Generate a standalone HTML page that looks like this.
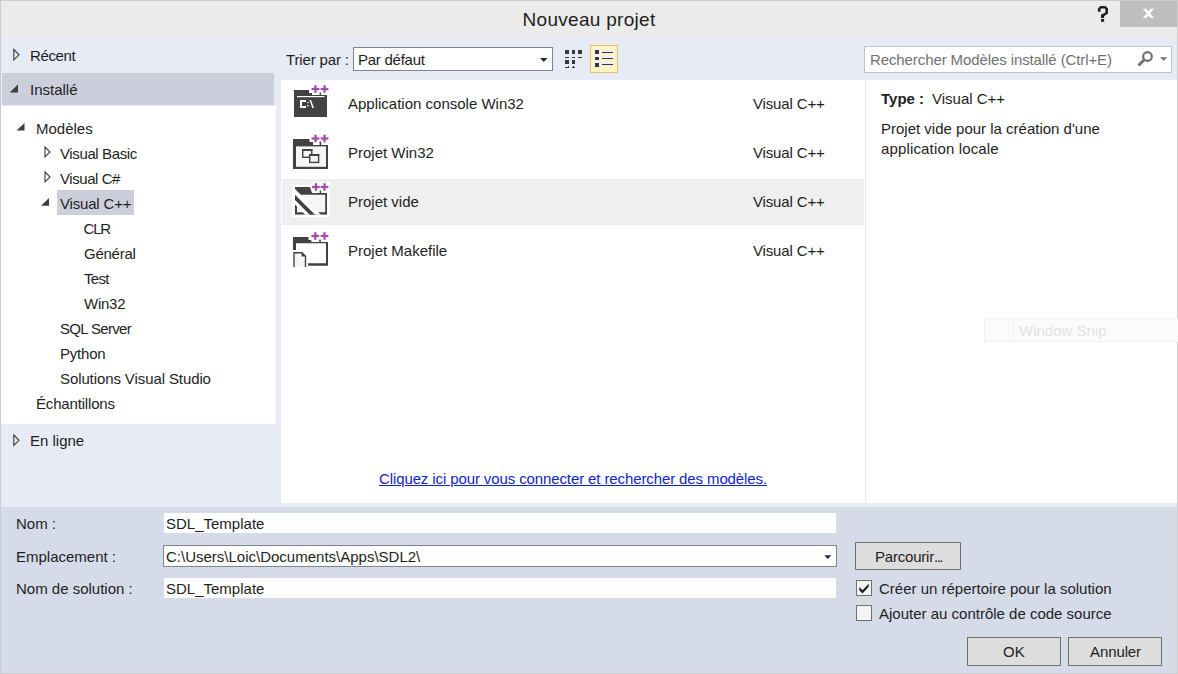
<!DOCTYPE html>
<html><head><meta charset="utf-8">
<style>
*{margin:0;padding:0;box-sizing:border-box}
html,body{width:1178px;height:674px;overflow:hidden;background:#CCCCCC}
body{position:relative;font-family:"Liberation Sans",sans-serif;font-size:15px;color:#1E1E1E}
.a{position:absolute}
.t{position:absolute;white-space:nowrap;line-height:17px;height:17px}
svg{position:absolute;overflow:visible}
</style></head><body>
<!-- title bar -->
<div class="a" style="left:1px;top:1px;width:1176px;height:37px;background:#EBEBEB"></div>
<div class="t" style="left:522.5px;top:9px;font-size:19px;line-height:22px;height:22px;color:#1E1E1E;letter-spacing:0.3px">Nouveau projet</div>
<svg style="left:0;top:0" width="1178" height="40">
 <path d="M1097.9 11.7 V8.6 L1100.4 6 H1105.5 L1108 8.5 V13.6 L1104.1 16.2 V17.9 H1101 V14.8 L1105.4 12.5 V9.2 L1104.8 8.6 H1101.1 L1100.5 9.2 V11.7 Z" fill="#1E1E1E"/>
 <rect x="1101" y="19" width="3.1" height="2.8" fill="#1E1E1E"/>
</svg>
<div class="a" style="left:1120px;top:1px;width:57px;height:26px;background:#BEBEBE"></div>
<svg style="left:0;top:0" width="1178" height="40">
 <path d="M1142.9 8.7 H1146.3 L1154 18.1 H1150.6 Z M1150.6 8.7 H1154 L1146.3 18.1 H1142.9 Z" fill="#FFFFFF"/>
</svg>

<!-- header / panels bg -->
<div class="a" style="left:1px;top:38px;width:1176px;height:469px;background:#E6EBF5"></div>
<!-- left: installed selection -->
<div class="a" style="left:2px;top:73px;width:272px;height:32px;background:#CCCEDB"></div>
<div class="a" style="left:1px;top:106px;width:275px;height:318px;background:#FFFFFF"></div>
<!-- center white -->
<div class="a" style="left:281px;top:80px;width:584px;height:423px;background:#FFFFFF"></div>
<div class="a" style="left:865px;top:80px;width:1px;height:423px;background:#E4E9F3"></div>
<div class="a" style="left:866px;top:80px;width:311px;height:423px;background:#FFFFFF"></div>
<!-- bottom panel -->
<div class="a" style="left:1px;top:507px;width:1176px;height:166px;background:#D6DBE9"></div>

<!-- left tree -->
<svg style="left:0;top:0" width="300" height="460">
 <g fill="none" stroke="#3E3E3E" stroke-width="1.1">
  <path d="M13.8 49.5 L19 54.8 L13.8 60 Z"/>
  <path d="M45 147 L50 152 L45 157 Z"/>
  <path d="M45 172 L50 177 L45 182 Z"/>
  <path d="M13.8 435 L19 440.3 L13.8 445.5 Z"/>
 </g>
 <g fill="#3E3E3E">
  <path d="M9.7 92.5 L18 92.5 L18 84.5 Z"/>
  <path d="M16.5 130.5 L24.5 130.5 L24.5 123 Z"/>
  <path d="M41 205.8 L49 205.8 L49 198 Z"/>
 </g>
</svg>
<div class="t" style="left:30px;top:47px;letter-spacing:-0.38px">Récent</div>
<div class="t" style="left:30px;top:81px">Installé</div>
<div class="t" style="left:36px;top:120px">Modèles</div>
<div class="t" style="left:60px;top:145px;letter-spacing:-0.38px">Visual Basic</div>
<div class="t" style="left:60px;top:170px;letter-spacing:-0.44px">Visual C#</div>
<div class="a" style="left:57px;top:190px;width:77px;height:25px;background:#CCCEDB"></div>
<div class="t" style="left:60px;top:195px;letter-spacing:-0.18px">Visual C++</div>
<div class="t" style="left:83.5px;top:220px;letter-spacing:-1.2px">CLR</div>
<div class="t" style="left:84px;top:245px;letter-spacing:-0.25px">Général</div>
<div class="t" style="left:84px;top:270px;letter-spacing:-0.7px">Test</div>
<div class="t" style="left:84px;top:295px;letter-spacing:-0.25px">Win32</div>
<div class="t" style="left:60px;top:320px;letter-spacing:-0.68px">SQL Server</div>
<div class="t" style="left:60px;top:345px;letter-spacing:-0.2px">Python</div>
<div class="t" style="left:60px;top:370px;letter-spacing:-0.1px">Solutions Visual Studio</div>
<div class="t" style="left:36px;top:395px;letter-spacing:-0.17px">Échantillons</div>
<div class="t" style="left:30px;top:432px">En ligne</div>

<!-- sort bar -->
<div class="t" style="left:286px;top:51px;letter-spacing:-0.15px">Trier par :</div>
<div class="a" style="left:353px;top:47px;width:200px;height:24px;background:#FFFFFF;border:1px solid #7D8594"></div>
<div class="t" style="left:358px;top:51px;letter-spacing:-0.25px">Par défaut</div>
<svg style="left:0;top:0" width="1178" height="80">
 <path d="M540 58 L547.5 58 L543.75 62 Z" fill="#1B293E"/>
</svg>
<!-- view icons -->
<svg style="left:0;top:0" width="700" height="80" shape-rendering="crispEdges">
 <g fill="#383838">
  <rect x="565" y="50" width="4" height="4"/><rect x="572" y="50" width="3" height="4"/><rect x="578" y="50" width="4" height="4"/>
  <rect x="565" y="57" width="4" height="1"/><rect x="572" y="57" width="3" height="1"/><rect x="578" y="57" width="4" height="1"/>
  <rect x="565" y="60" width="4" height="4"/><rect x="572" y="60" width="3" height="4"/>
  <rect x="565" y="67" width="4" height="1"/><rect x="568" y="66" width="1" height="1"/><rect x="572" y="67" width="3" height="1"/><rect x="573" y="66" width="1" height="1"/>
 </g>
 <rect x="590.7" y="45.7" width="26.6" height="26.6" fill="#FFF2C4" stroke="#E6C062" stroke-width="1.4"/>
 <g fill="#F0F0F2"><rect x="594" y="49" width="6" height="19"/><rect x="601" y="50" width="13" height="4"/><rect x="601" y="56" width="13" height="4"/><rect x="601" y="62" width="13" height="4"/></g>
 <g fill="#383838">
  <rect x="595" y="50" width="4" height="4"/><rect x="602" y="52" width="11" height="1"/>
  <rect x="595" y="57" width="4" height="3"/><rect x="602" y="58" width="11" height="1"/>
  <rect x="595" y="63" width="4" height="4"/><rect x="602" y="64" width="11" height="1"/>
 </g>
</svg>
<!-- search -->
<div class="a" style="left:864px;top:46px;width:308px;height:27px;background:#FFFFFF;border:1px solid #BCC3D2"></div>
<div class="t" style="left:870px;top:51px;color:#717171;letter-spacing:-0.1px">Rechercher Modèles installé (Ctrl+E)</div>
<svg style="left:0;top:0" width="1178" height="80">
 <circle cx="1147.5" cy="56.5" r="4.3" fill="none" stroke="#717171" stroke-width="2.2"/>
 <line x1="1144.2" y1="59.8" x2="1138.5" y2="65.5" stroke="#717171" stroke-width="3"/>
 <path d="M1160 57.2 L1167.3 57.2 L1163.65 60.8 Z" fill="#717171"/>
</svg>

<!-- list items -->
<div class="a" style="left:282px;top:179px;width:582px;height:46px;background:#EFEFEF"></div>
<div class="t" style="left:348px;top:95px">Application console Win32</div>
<div class="t" style="left:753px;top:95px;letter-spacing:-0.15px">Visual C++</div>
<div class="t" style="left:348px;top:144px">Projet Win32</div>
<div class="t" style="left:753px;top:144px;letter-spacing:-0.15px">Visual C++</div>
<div class="t" style="left:348px;top:193px">Projet vide</div>
<div class="t" style="left:753px;top:193px;letter-spacing:-0.15px">Visual C++</div>
<div class="t" style="left:348px;top:242px">Projet Makefile</div>
<div class="t" style="left:753px;top:242px;letter-spacing:-0.15px">Visual C++</div>

<!-- icons -->
<svg style="left:0;top:0" width="340" height="280">
 <defs>
  <clipPath id="c3"><rect x="295" y="187" width="32" height="27.7"/></clipPath>
 </defs>
 <!-- icon1 console -->
 <path d="M294 90 H309 V93 H312 V95 H327 V117 H294 Z" fill="#424242"/>
 <rect x="312" y="83" width="19" height="12" fill="#FFFFFF"/>
 <rect x="319.6" y="92.5" width="1.4" height="3" fill="#424242"/>
 <rect x="297" y="96" width="27.5" height="1.2" fill="#FFFFFF"/>
 <path d="M306 100 H300 V108 H306 V106 H302 V102 H306 Z" fill="#FFFFFF"/>
 <rect x="307.2" y="101.8" width="1.3" height="1.4" fill="#fff"/><rect x="307.2" y="105" width="1.3" height="1.4" fill="#fff"/>
 <path d="M309.5 100 L311 100 L314 108 L312.3 108 Z" fill="#fff"/>
 <g fill="#A24CA8"><rect x="314.35" y="85.25" width="2.3" height="7.5"/><rect x="311.60" y="87.90" width="7.8" height="2.2"/><rect x="323.35" y="85.25" width="2.3" height="7.5"/><rect x="320.60" y="87.90" width="7.8" height="2.2"/></g>

 <!-- icon2 win32 -->
 <path d="M293 139 H309.5 V142 H313 V145 H328 V169 H293 Z" fill="#424242"/>
 <rect x="296" y="146.4" width="30" height="20.4" fill="#F6F6F6"/>
 <rect x="313" y="132" width="17" height="12.8" fill="#FFFFFF"/>
 <rect x="319.6" y="141.5" width="1.6" height="4" fill="#424242"/>
 <rect x="302.7" y="149.7" width="9" height="7.6" fill="#F6F6F6" stroke="#424242" stroke-width="1.4"/>
 <rect x="302" y="149" width="10.4" height="2" fill="#424242"/>
 <rect x="309.7" y="154.7" width="8.9" height="7.7" fill="#F6F6F6" stroke="#424242" stroke-width="1.4"/>
 <rect x="309" y="154" width="10.3" height="2" fill="#424242"/>
 <g fill="#A24CA8"><rect x="314.35" y="134.75" width="2.3" height="7.5"/><rect x="311.60" y="137.40" width="7.8" height="2.2"/><rect x="323.35" y="134.75" width="2.3" height="7.5"/><rect x="320.60" y="137.40" width="7.8" height="2.2"/></g>

 <!-- icon3 empty -->
 <rect x="292" y="184.8" width="37.7" height="32.2" fill="#FFFFFF"/>
 <rect x="311" y="182" width="19" height="10" fill="#FFFFFF"/>
 <g clip-path="url(#c3)">
  <rect x="297" y="194.7" width="28.2" height="17.5" fill="#F6F6F6"/>
  <path d="M295 187 H310 L312 192.7 V193 H327 V214.7 H295 Z M297 194.7 V212.2 H325.2 V194.7 Z" fill="#424242" fill-rule="evenodd"/>
  <path d="M280 174 L340 234 L340 249.5 L280 189.5 Z" fill="#FFFFFF"/>
  <path d="M280 179.7 L340 239.7 L340 245 L280 185 Z" fill="#424242"/>
 </g>
 <rect x="319.7" y="190.5" width="1.4" height="3" fill="#424242"/>
 <g fill="#A24CA8"><rect x="314.75" y="183.25" width="2.3" height="7.5"/><rect x="312.00" y="185.90" width="7.8" height="2.2"/><rect x="323.35" y="183.25" width="2.3" height="7.5"/><rect x="320.60" y="185.90" width="7.8" height="2.2"/></g>

 <!-- icon4 makefile -->
 <path d="M293 237 H308.5 V240 H311.5 V242 H328 V265.7 H308 V263.2 H326 V243.3 H296 V250 H293 Z" fill="#424242"/>
 <rect x="311.5" y="230" width="18.5" height="11.5" fill="#FFFFFF"/>
 <rect x="319.2" y="239.5" width="1.6" height="3.5" fill="#424242"/>
 <path d="M294 267 V252.7 H302 L305.5 256.3 V267" fill="#F6F6F6" stroke="#424242" stroke-width="1.4"/>
 <path d="M301.6 252 V256.6 H306 Z" fill="#424242"/>
 <g fill="#A24CA8"><rect x="314.15" y="232.25" width="2.3" height="7.5"/><rect x="311.40" y="234.90" width="7.8" height="2.2"/><rect x="323.35" y="232.25" width="2.3" height="7.5"/><rect x="320.60" y="234.90" width="7.8" height="2.2"/></g>
</svg>

<!-- info panel -->
<div class="t" style="left:881px;top:90px;font-weight:bold">Type :</div>
<div class="t" style="left:932px;top:90px">Visual C++</div>
<div class="t" style="left:881px;top:120px">Projet vide pour la création d'une</div>
<div class="t" style="left:881px;top:140px;letter-spacing:0.15px">application locale</div>

<!-- window snip ghost -->
<div class="a" style="left:984px;top:318px;width:194px;height:24px;background:#FAFBFD;border:1px solid #EEF1F7;border-right:none"></div>
<div class="a" style="left:1013px;top:319px;width:1px;height:22px;background:#F0F2F7"></div>
<div class="t" style="left:1019px;top:322px;color:#E2E2E2">Window Snip</div>

<!-- link -->
<div class="t" style="left:379px;top:470px;color:#1224C8;text-decoration:underline;letter-spacing:-0.11px">Cliquez ici pour vous connecter et rechercher des modèles.</div>

<!-- bottom form -->
<div class="t" style="left:16px;top:515px">Nom :</div>
<div class="t" style="left:16px;top:548px">Emplacement :</div>
<div class="t" style="left:16px;top:580px">Nom de solution :</div>
<div class="a" style="left:164px;top:513px;width:672px;height:20px;background:#FFFFFF"></div>
<div class="t" style="left:166px;top:515px">SDL_Template</div>
<div class="a" style="left:163px;top:545px;width:674px;height:22px;background:#FFFFFF;border:1px solid #7D8594"></div>
<div class="t" style="left:166px;top:548px">C:\Users\Loic\Documents\Apps\SDL2\</div>
<svg style="left:0;top:0" width="1178" height="674">
 <path d="M824.3 555.3 L831.3 555.3 L827.8 558.9 Z" fill="#1B293E"/>
</svg>
<div class="a" style="left:164px;top:578px;width:672px;height:20px;background:#FFFFFF"></div>
<div class="t" style="left:166px;top:580px">SDL_Template</div>

<div class="a" style="left:855px;top:542px;width:106px;height:28px;background:#DDDDDD;border:1px solid #707070"></div>
<div class="t" style="left:875px;top:548px;letter-spacing:-0.2px">Parcourir<span style="letter-spacing:-1.6px">...</span></div>

<div class="a" style="left:856px;top:580px;width:16px;height:16px;background:#F3F3F3;border:1px solid #707070"></div>
<svg style="left:0;top:0" width="1178" height="674">
 <path d="M859.3 587 L862.5 590.3 L868.7 583.7 L868.7 586.8 L862.5 593.6 L859.3 590.2 Z" fill="#1E1E1E"/>
</svg>
<div class="t" style="left:879px;top:580px">Créer un répertoire pour la solution</div>
<div class="a" style="left:856px;top:605px;width:16px;height:16px;background:#F3F3F3;border:1px solid #707070"></div>
<div class="t" style="left:879px;top:605px">Ajouter au contrôle de code source</div>

<div class="a" style="left:967px;top:637px;width:94px;height:29px;background:#DDDDDD;border:1px solid #707070"></div>
<div class="t" style="left:1003px;top:643px">OK</div>
<div class="a" style="left:1068px;top:637px;width:94px;height:29px;background:#DDDDDD;border:1px solid #707070"></div>
<div class="t" style="left:1090px;top:643px;letter-spacing:-0.1px">Annuler</div>
</body></html>
